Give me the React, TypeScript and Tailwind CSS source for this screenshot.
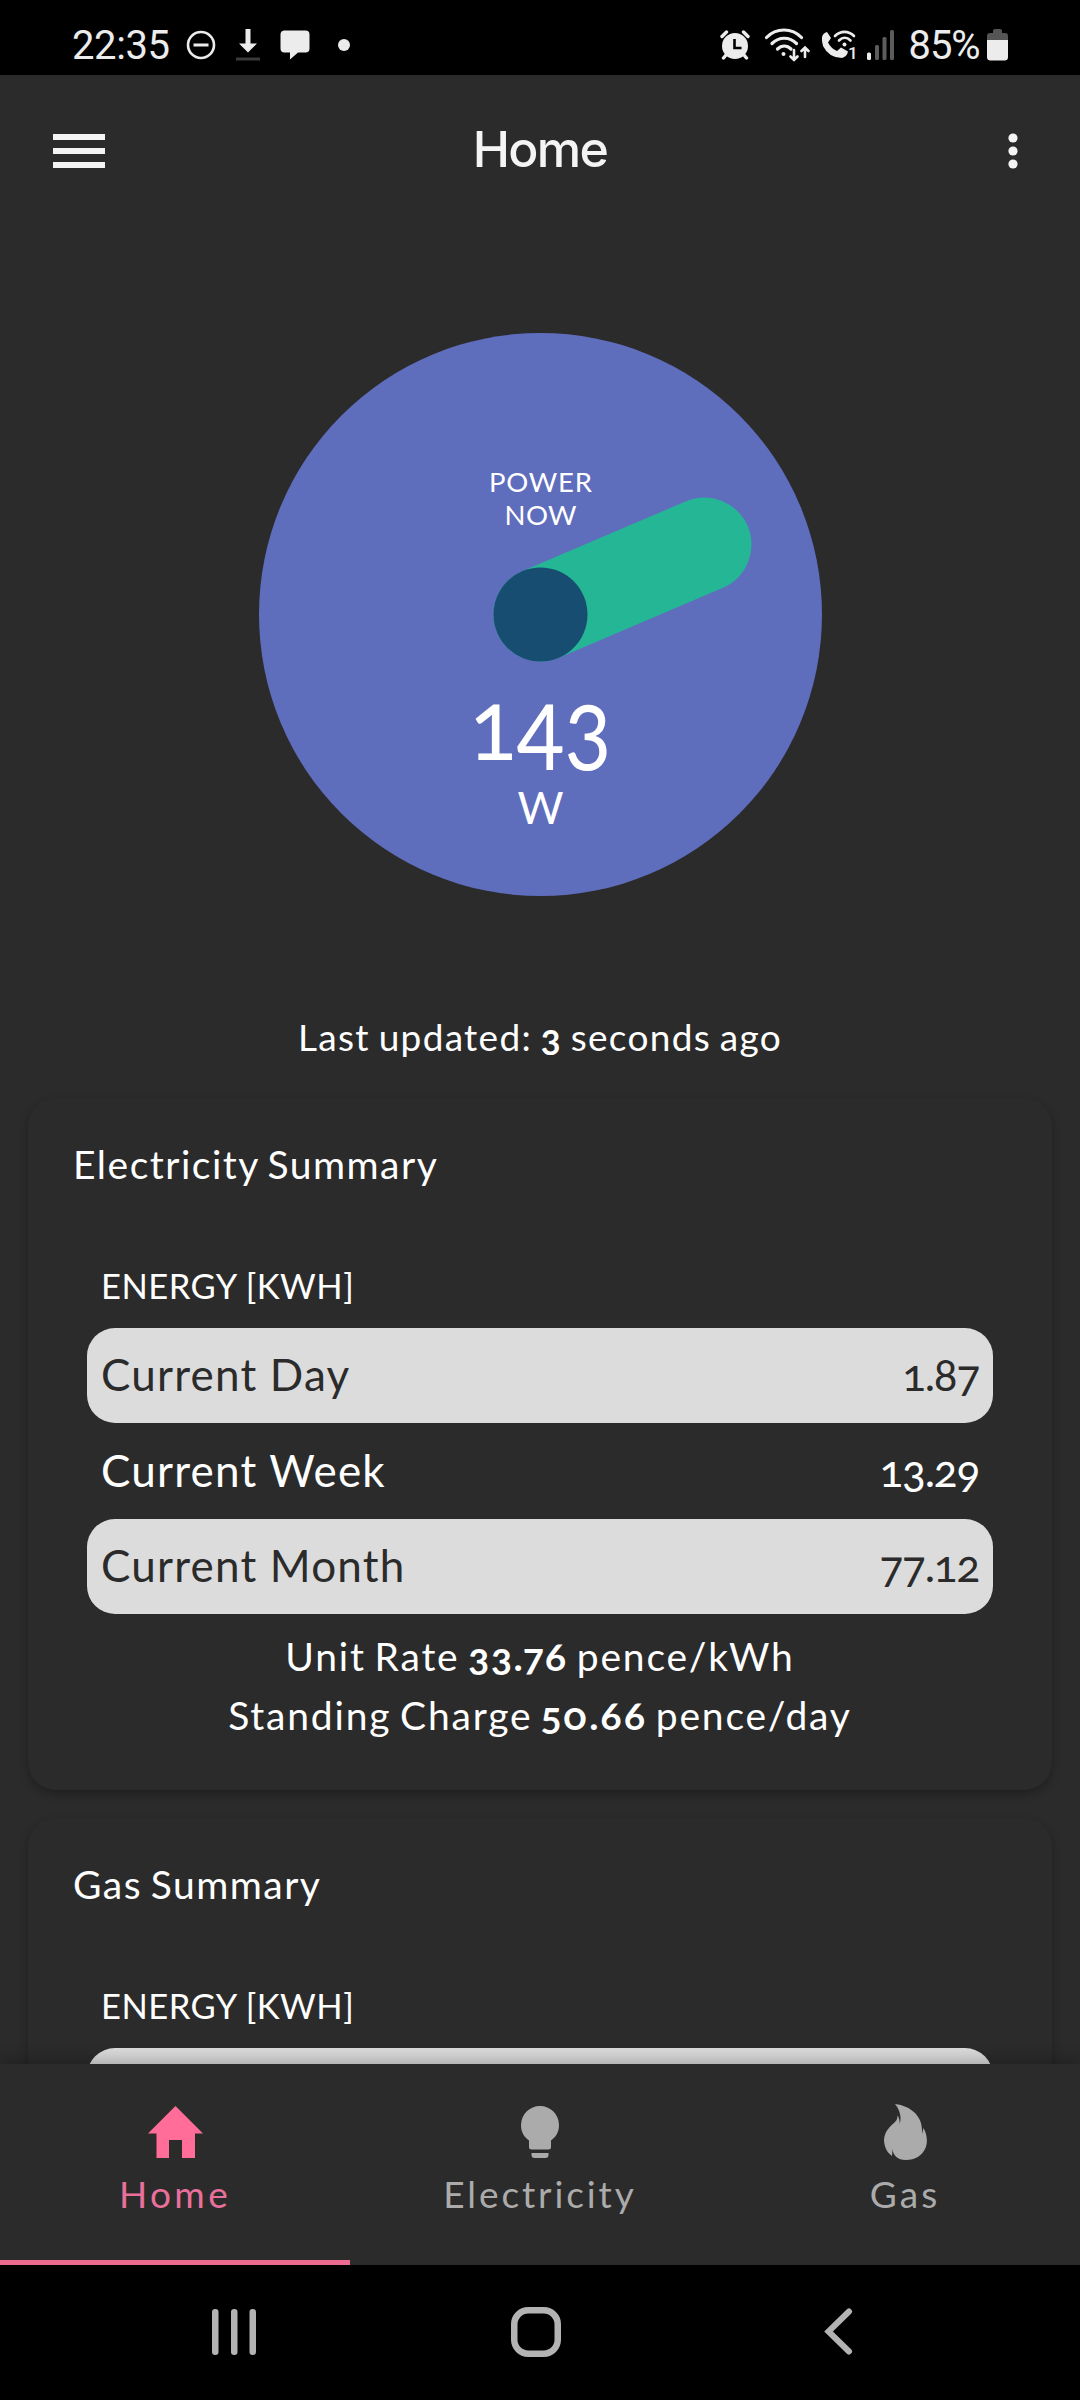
import type { ReactNode } from 'react';

type Reading = { label: string; value: string };

const electricity: Reading[] = [
  { label: 'Current Day', value: '1.87' },
  { label: 'Current Week', value: '13.29' },
  { label: 'Current Month', value: '77.12' },
];

function StatusBar() {
  return (
    <div className="h-[75px] shrink-0 bg-black text-[#ececec] flex items-center justify-between px-[72px] pt-[15px] font-['Roboto',sans-serif] lining-nums">
      <div className="flex items-center">
        <span className="text-[40px] leading-none tracking-[-0.4px] w-[114px] pt-[2px]">22:35</span>
        <svg width="30" height="30" viewBox="0 0 30 30" fill="none" stroke="currentColor" strokeWidth="2.6">
          <circle cx="15" cy="15" r="13" />
          <path d="M7.5 15h15" strokeWidth="3" />
        </svg>
        <svg className="ml-5" width="24" height="32" viewBox="0 0 24 32">
          <path d="M9.5 0h5v14.5H21L12 23.5 3 14.5h6.5z" fill="currentColor" />
          <path d="M0 28.5h24v3H0z" fill="#3a3a3a" />
        </svg>
        <svg className="ml-5" width="30" height="30" viewBox="0 0 30 30" fill="currentColor">
          <path d="M4 .5h21.5a4 4 0 0 1 4 4v14a4 4 0 0 1-4 4H18L10 29.5v-7H4.5a4 4 0 0 1-4-4v-14a4 4 0 0 1 3.5-4z" />
        </svg>
        <span className="ml-[28px] size-3 rounded-full bg-[#ececec]" />
      </div>
      <div className="flex items-center">
        {/* alarm */}
        <svg width="30" height="30" viewBox="0 0 30 30">
          <circle cx="15" cy="16" r="13" fill="currentColor" />
          <path d="M2 6.5L6.5 2M28 6.5L23.5 2M6 25l-2.5 3M24 25l2.5 3" stroke="currentColor" strokeWidth="3.4" strokeLinecap="round" />
          <path d="M14.5 9v9h7" fill="none" stroke="#000" strokeWidth="2.6" />
        </svg>
        {/* wifi with traffic arrows */}
        <svg className="ml-[14px]" width="46" height="34" viewBox="0 0 46 34" fill="none" stroke="currentColor" strokeWidth="3.2" strokeLinecap="round">
          <path d="M2.5 9.5c9.5-10 25.5-10 35 0M8 15.5c7-7 17.5-7 24.5 0M13.5 21c4-4 9.5-4 13.5 0" />
          <circle cx="19.5" cy="26" r="2" fill="currentColor" stroke="none" />
          <path d="M30 22v10M26.5 28.5L30 32l3.5-3.5M41 29V20M37.5 23L41 19.5 44.5 23" strokeWidth="2.6" />
        </svg>
        {/* wifi calling */}
        <svg className="ml-[11px] overflow-visible" width="36" height="31" viewBox="0 0 36 31">
          <path d="M1 7Q2 3 6 2l4 6-3 4.5Q10 18.5 16 21l4-3.5 7 4q-1 5-6 6.5Q8 28 2 16 .5 11 1 7z" fill="currentColor" />
          <path d="M14 6c5.5-5.5 13.5-5.5 19 0M18 10.5c3.5-3.5 8-3.5 11.5 0" fill="none" stroke="currentColor" strokeWidth="2.6" strokeLinecap="round" />
          <circle cx="23.5" cy="14.5" r="2" fill="currentColor" />
          <text x="27" y="29" fontSize="17" fontWeight="500" fill="currentColor">1</text>
        </svg>
        <svg className="ml-[10px]" width="28" height="30" viewBox="0 0 28 30">
          <rect x="0" y="22.5" width="4" height="7.5" rx="1.5" fill="currentColor" />
          <rect x="8" y="15" width="4" height="15" rx="1.5" fill="#5c5c5c" />
          <rect x="15.5" y="7" width="4" height="23" rx="1.5" fill="#5c5c5c" />
          <rect x="23" y="0" width="4" height="30" rx="1.5" fill="#5c5c5c" />
        </svg>
        <span className="ml-[13px] w-[79px] pt-[2px] text-[40px] leading-none tracking-[-1.2px] whitespace-nowrap">85%</span>
        <svg width="21" height="32" viewBox="0 0 21 32">
          <path d="M0 11V7q0-3 3-3h3V2q0-2 2-2h5q2 0 2 2v2h3q3 0 3 3v4z" fill="#555" />
          <path d="M0 11h21v17q0 3.5-3.5 3.5h-14Q0 31.5 0 28z" fill="currentColor" />
        </svg>
      </div>
    </div>
  );
}

function Header() {
  return (
    <header className="h-[151px] shrink-0 grid grid-cols-[1fr_auto_1fr] items-center pl-[53px] pr-[62px]">
      <svg width="52" height="34" viewBox="0 0 52 34" fill="#f4f4f4">
        <rect width="52" height="6" />
        <rect y="14" width="52" height="6" />
        <rect y="28" width="52" height="6" />
      </svg>
      <h1 className="ml-[9px] pb-[3px] font-['Inter',sans-serif] font-medium text-[50px] leading-none tracking-[-1.7px] text-[#f4f4f4]">Home</h1>
      <svg className="justify-self-end" width="10" height="36" viewBox="0 0 10 36" fill="#f4f4f4">
        <circle cx="5" cy="5" r="4.6" />
        <circle cx="5" cy="18" r="4.6" />
        <circle cx="5" cy="31" r="4.6" />
      </svg>
    </header>
  );
}

function PowerDial() {
  return (
    <svg className="mt-[107px] mx-auto block oldstyle-nums tabular-nums" width="563" height="563" viewBox="0 0 563 563" textAnchor="middle" fill="#fff">
      <circle cx="281.5" cy="281.5" r="281.5" fill="#5f6dbd" />
      <path d="M281.5 281.5L445.5 211.5" stroke="#25b795" strokeWidth="94" strokeLinecap="round" />
      <circle cx="281.5" cy="281.5" r="47" fill="#164d70" />
      <text x="281.5" y="158.5" fontSize="27.5" textLength="103">POWER</text>
      <text x="281.5" y="192" fontSize="27.5" textLength="72">NOW</text>
      <text x="281.5" y="427" fontSize="98" textLength="142" lengthAdjust="spacingAndGlyphs">143</text>
      <text x="281.5" y="491" fontSize="44.5">W</text>
    </svg>
  );
}

function SummaryCard({ title, rows, children }: { title: string; rows: Reading[]; children?: ReactNode }) {
  return (
    <section className="mx-7 rounded-[28px] px-[45px] pt-[42px] pb-[45px] shadow-[0_4px_8px_rgba(0,0,0,0.27)]">
      <h2 className="text-[39px] leading-[48px] tracking-[1.5px] [word-spacing:-3px]">{title}</h2>
      <div className="mx-[14px]">
        <p className="mt-[76px] mb-5 px-[14px] text-[34.5px] leading-[44px] tracking-[0.5px]">ENERGY [KWH]</p>
        {rows.map((row, index) => (
          <div
            key={index}
            className={`h-[95.5px] rounded-[28px] px-[14px] pb-[2px] flex items-center justify-between text-[44px] ${
              index % 2 === 0 ? 'bg-[#dcdcdc] text-[#2b2b2b]' : ''
            }`}
          >
            <span className="tracking-[1.2px]">{row.label}</span>
            <span className="oldstyle-nums tabular-nums tracking-[-1.2px]">{row.value}</span>
          </div>
        ))}
      </div>
      {children}
    </section>
  );
}

function BottomNav() {
  return (
    <nav className="relative h-[201px] shrink-0 grid grid-cols-[350px_1fr_350px] bg-[#2b2b2b] text-[#ababab] text-[37px] leading-[44px] shadow-[0_-4px_16px_rgba(0,0,0,0.25)]">
      <div className="flex flex-col items-center pt-[40px] border-b-[5px] border-[#ec6a8f] text-[#ff6d98]">
        <svg width="55" height="56" viewBox="0 0 55 56" fill="currentColor">
          <path d="M27.5 2L55 29.5h-8V54H34V36H21v18H8.5V29.5H0z" />
        </svg>
        <span className="mt-[12px] tracking-[3.4px] text-[#e8709a]">Home</span>
      </div>
      <div className="flex flex-col items-center pt-[40px]">
        <svg width="38" height="56" viewBox="0 0 38 56" fill="currentColor">
          <path d="M19 2a19 19 0 0 1 19 19c0 7-3 12-8 15.5V43q0 2.5-2.5 2.5h-17Q8 45.5 8 43v-6.5C3 33 0 28 0 21A19 19 0 0 1 19 2zM10.5 49h17v2q0 3-3 3h-11q-3 0-3-3z" />
        </svg>
        <span className="mt-[12px] tracking-[2.9px]">Electricity</span>
      </div>
      <div className="flex flex-col items-center pt-[40px]">
        <svg width="43" height="56" viewBox="0 0 43 56" fill="currentColor">
          <path d="M11 0C27 2 38 12 38 26v4l1.5-6C43 30 44 38 41.5 44 38 52 31 56 22 56 13 56 9 51 8.5 45l-.5 7C2 48 0 41 0 35.5 1 26 7 22 11 18c2-2 2.5-4 2.5-6.5 1.5 2 2.5 5 2 8.5C18 14 16 6 11 0z" />
        </svg>
        <span className="mt-[12px] tracking-[3px]">Gas</span>
      </div>
    </nav>
  );
}

function SystemNav() {
  return (
    <div className="h-[135px] shrink-0 bg-black flex items-center pl-[212px] pb-[2px] text-[#b3b3b3]">
      <svg width="45" height="46" viewBox="0 0 45 46" fill="currentColor">
        <rect width="6.5" height="46" rx="3" />
        <rect x="19" width="6.5" height="46" rx="3" />
        <rect x="37.5" width="6.5" height="46" rx="3" />
      </svg>
      <svg className="ml-[254px]" width="50" height="50" viewBox="0 0 50 50" fill="none" stroke="currentColor" strokeWidth="6.5">
        <rect x="3.25" y="3.25" width="43.5" height="43.5" rx="14" />
      </svg>
      <svg className="ml-[263px]" width="29" height="47" viewBox="0 0 29 47" fill="none" stroke="currentColor" strokeWidth="6" strokeLinecap="round">
        <path d="M25 3.5L4.5 23.5 25 43.5" />
      </svg>
    </div>
  );
}

export default function App() {
  return (
    <div className="w-[1080px] h-[2400px] flex flex-col overflow-hidden bg-[#2b2b2b] text-white font-['Lato',sans-serif] oldstyle-nums proportional-nums">
      <StatusBar />
      <Header />
      <main className="flex-1 min-h-0 overflow-hidden">
        <PowerDial />
        <p className="mt-[117px] text-center text-[37px] leading-[48px] tracking-[1.3px] [word-spacing:-2px]">
          Last updated: <b>3</b> seconds ago
        </p>
        <div className="mt-[36.5px] flex flex-col gap-7">
          <SummaryCard title="Electricity Summary" rows={electricity}>
            <div className="mt-[13px] text-center text-[39px] leading-[59px] tracking-[1.8px] [word-spacing:-3px]">
              <p>
                Unit Rate <b>33.76</b> pence/kWh
              </p>
              <p>
                Standing Charge <b>50.66</b> pence/day
              </p>
            </div>
          </SummaryCard>
          {/* first gas reading has not arrived yet */}
          <SummaryCard title="Gas Summary" rows={[{ label: '', value: '' }]} />
        </div>
      </main>
      <BottomNav />
      <SystemNav />
    </div>
  );
}
